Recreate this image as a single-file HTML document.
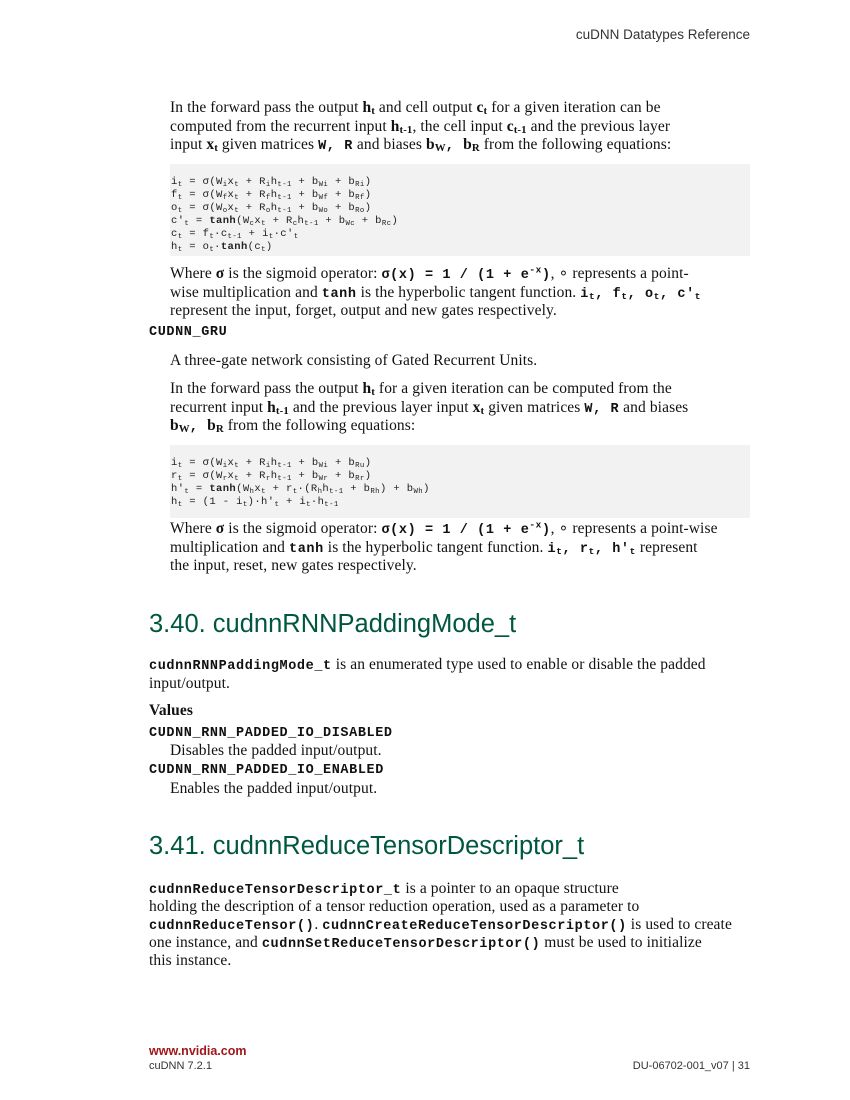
<!DOCTYPE html>
<html><head><meta charset="utf-8"><style>
body{margin:0;width:850px;height:1100px;background:#fff;position:relative;font-family:"Liberation Serif",serif;color:#111;overflow:hidden}
.l{position:absolute;white-space:nowrap;font-size:15.5px;line-height:18px;height:18px;letter-spacing:0.1px}
.m{font-family:"Liberation Mono",monospace;font-weight:bold;font-size:13.5px;letter-spacing:0.6px}
.c{position:absolute;font-family:"Liberation Mono",monospace;font-size:10.5px;line-height:13px;white-space:nowrap;color:#222;letter-spacing:0.4px}
.code{position:absolute;left:170px;width:580px;background:#f2f2f2}
.h{position:absolute;left:149px;font-family:"Liberation Sans",sans-serif;font-size:25.5px;color:#00573f;line-height:30px;white-space:nowrap}
sub{font-size:70%;vertical-align:-2px;line-height:0}
sup{font-size:70%;line-height:0}
.s{font-family:"Liberation Sans",sans-serif;font-size:12px;position:absolute;white-space:nowrap;line-height:14px}
</style></head><body>
<div class="s" style="top:28px;right:100px;color:#333;font-size:13.5px">cuDNN Datatypes Reference</div>

<div class="l" style="left:170px;top:99px">In the forward pass the output <b>h<sub>t</sub></b> and cell output <b>c<sub>t</sub></b> for a given iteration can be</div>
<div class="l" style="left:170px;top:118px">computed from the recurrent input <b>h<sub>t-1</sub></b>, the cell input <b>c<sub>t-1</sub></b> and the previous layer</div>
<div class="l" style="left:170px;top:136px">input <b>x<sub>t</sub></b> given matrices <span class="m">W, R</span> and biases <b>b<sub>W</sub></b><span class="m">, </span><b>b<sub>R</sub></b> from the following equations:</div>

<div class="code" style="top:164px;height:92px"></div>
<div class="c" style="left:171px;top:176px">i<sub>t</sub> = σ(W<sub>i</sub>x<sub>t</sub> + R<sub>i</sub>h<sub>t-1</sub> + b<sub>Wi</sub> + b<sub>Ri</sub>)<br>f<sub>t</sub> = σ(W<sub>f</sub>x<sub>t</sub> + R<sub>f</sub>h<sub>t-1</sub> + b<sub>Wf</sub> + b<sub>Rf</sub>)<br>o<sub>t</sub> = σ(W<sub>o</sub>x<sub>t</sub> + R<sub>o</sub>h<sub>t-1</sub> + b<sub>Wo</sub> + b<sub>Ro</sub>)<br>c'<sub>t</sub> = <b>tanh</b>(W<sub>c</sub>x<sub>t</sub> + R<sub>c</sub>h<sub>t-1</sub> + b<sub>Wc</sub> + b<sub>Rc</sub>)<br>c<sub>t</sub> = f<sub>t</sub>·c<sub>t-1</sub> + i<sub>t</sub>·c'<sub>t</sub><br>h<sub>t</sub> = o<sub>t</sub>·<b>tanh</b>(c<sub>t</sub>)</div>

<div class="l" style="left:170px;top:265px">Where <b>σ</b> is the sigmoid operator: <span class="m">σ(x) = 1 / (1 + e<sup>-x</sup>)</span>, ∘ represents a point-</div>
<div class="l" style="left:170px;top:284px">wise multiplication and <span class="m">tanh</span> is the hyperbolic tangent function. <span class="m">i<sub>t</sub>, f<sub>t</sub>, o<sub>t</sub>, c'<sub>t</sub></span></div>
<div class="l" style="left:170px;top:302px">represent the input, forget, output and new gates respectively.</div>
<div class="l m" style="left:149px;top:324px">CUDNN_GRU</div>
<div class="l" style="left:170px;top:352px">A three-gate network consisting of Gated Recurrent Units.</div>
<div class="l" style="left:170px;top:380px">In the forward pass the output <b>h<sub>t</sub></b> for a given iteration can be computed from the</div>
<div class="l" style="left:170px;top:399px">recurrent input <b>h<sub>t-1</sub></b> and the previous layer input <b>x<sub>t</sub></b> given matrices <span class="m">W, R</span> and biases</div>
<div class="l" style="left:170px;top:417px"><b>b<sub>W</sub></b><span class="m">, </span><b>b<sub>R</sub></b> from the following equations:</div>

<div class="code" style="top:445px;height:73px"></div>
<div class="c" style="left:171px;top:457px">i<sub>t</sub> = σ(W<sub>i</sub>x<sub>t</sub> + R<sub>i</sub>h<sub>t-1</sub> + b<sub>Wi</sub> + b<sub>Ru</sub>)<br>r<sub>t</sub> = σ(W<sub>r</sub>x<sub>t</sub> + R<sub>r</sub>h<sub>t-1</sub> + b<sub>Wr</sub> + b<sub>Rr</sub>)<br>h'<sub>t</sub> = <b>tanh</b>(W<sub>h</sub>x<sub>t</sub> + r<sub>t</sub>·(R<sub>h</sub>h<sub>t-1</sub> + b<sub>Rh</sub>) + b<sub>Wh</sub>)<br>h<sub>t</sub> = (1 - i<sub>t</sub>)·h'<sub>t</sub> + i<sub>t</sub>·h<sub>t-1</sub></div>

<div class="l" style="left:170px;top:520px">Where <b>σ</b> is the sigmoid operator: <span class="m">σ(x) = 1 / (1 + e<sup>-x</sup>)</span>, ∘ represents a point-wise</div>
<div class="l" style="left:170px;top:539px">multiplication and <span class="m">tanh</span> is the hyperbolic tangent function. <span class="m">i<sub>t</sub>, r<sub>t</sub>, h'<sub>t</sub></span> represent</div>
<div class="l" style="left:170px;top:557px">the input, reset, new gates respectively.</div>

<div class="h" style="top:609px">3.40. cudnnRNNPaddingMode_t</div>
<div class="l" style="left:149px;top:656px"><span class="m">cudnnRNNPaddingMode_t</span> is an enumerated type used to enable or disable the padded</div>
<div class="l" style="left:149px;top:675px">input/output.</div>
<div class="l" style="left:149px;top:702px"><b>Values</b></div>
<div class="l m" style="left:149px;top:725px">CUDNN_RNN_PADDED_IO_DISABLED</div>
<div class="l" style="left:170px;top:742px">Disables the padded input/output.</div>
<div class="l m" style="left:149px;top:762px">CUDNN_RNN_PADDED_IO_ENABLED</div>
<div class="l" style="left:170px;top:780px">Enables the padded input/output.</div>

<div class="h" style="top:831px">3.41. cudnnReduceTensorDescriptor_t</div>
<div class="l" style="left:149px;top:880px"><span class="m">cudnnReduceTensorDescriptor_t</span> is a pointer to an opaque structure</div>
<div class="l" style="left:149px;top:898px">holding the description of a tensor reduction operation, used as a parameter to</div>
<div class="l" style="left:149px;top:916px"><span class="m">cudnnReduceTensor()</span>. <span class="m">cudnnCreateReduceTensorDescriptor()</span> is used to create</div>
<div class="l" style="left:149px;top:934px">one instance, and <span class="m">cudnnSetReduceTensorDescriptor()</span> must be used to initialize</div>
<div class="l" style="left:149px;top:952px">this instance.</div>

<div class="s" style="left:149px;top:1044px;color:#a0161b;font-weight:bold;font-size:12.5px">www.nvidia.com</div>
<div class="s" style="left:149px;top:1059px;color:#333;font-size:11px">cuDNN 7.2.1</div>
<div class="s" style="right:100px;top:1059px;color:#333;font-size:11px">DU-06702-001_v07 | 31</div>
</body></html>
